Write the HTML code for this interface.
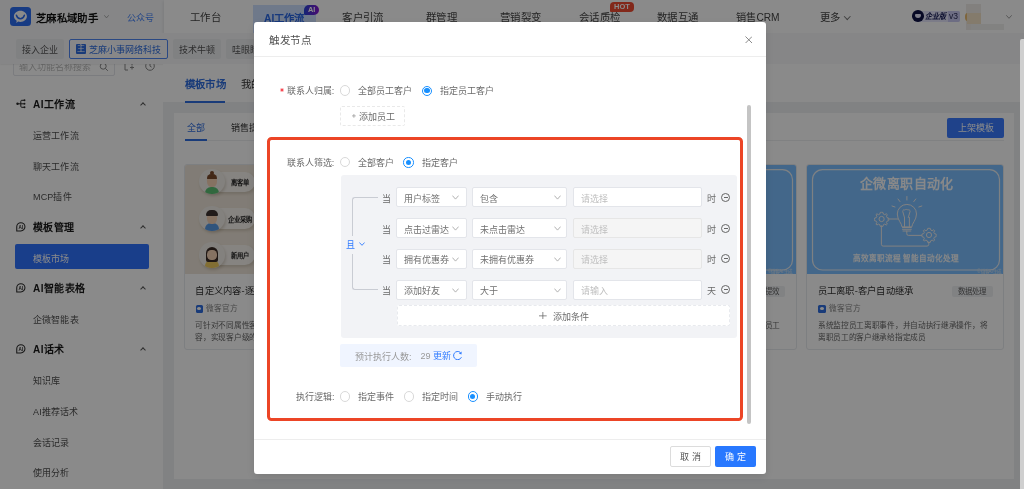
<!DOCTYPE html>
<html lang="zh-CN"><head><meta charset="utf-8">
<style>
*{box-sizing:border-box;margin:0;padding:0}
html,body{width:1024px;height:489px;overflow:hidden}
body{font-family:"Liberation Sans",sans-serif;background:#eef0f3;position:relative;color:#333;will-change:transform}
.a{position:absolute}
.t{position:absolute;white-space:nowrap;line-height:22px;height:20px}
svg{display:block}
/* header */
#hdr{left:0;top:0;width:1024px;height:33.3px;background:#f7f8fa}
#nav{left:163.5px;top:0;width:860px;height:33.3px;background:#fff;box-shadow:-1px 1px 3px rgba(0,0,0,.08)}
#row2{left:0;top:33.3px;width:1024px;height:30.5px;background:#f7f8fa;box-shadow:0 .6px 1.5px rgba(0,0,0,.12)}
.chip{position:absolute;top:39px;height:19.8px;background:#eceef1;border-radius:2px}
#side{left:0;top:63.8px;width:163.3px;height:426px;background:#fff}
.si{position:absolute;left:33px;font-size:9px;letter-spacing:.15px;color:#505050;line-height:22.5px;height:20px;white-space:nowrap}
.sh{position:absolute;left:33px;font-size:10px;letter-spacing:.45px;font-weight:bold;color:#1a1a1a;line-height:22.5px;height:20px;white-space:nowrap}
.chev{position:absolute;left:140px;width:6px;height:6px}
#mask{left:0;top:0;width:1024px;height:489px;background:rgba(0,0,0,.46)}
/* modal */
#modal{left:254.3px;top:21.8px;width:512px;height:452px;background:#fff;border-radius:3px;box-shadow:0 3px 10px rgba(0,0,0,.12)}
.lab{position:absolute;font-size:9px;color:#6a6a6a;line-height:22px;height:20px;white-space:nowrap}
.rd{position:absolute;width:10.4px;height:10.4px;border:1px solid #d9d9d9;border-radius:50%;background:#fff}
.rd.on{border-color:#1890ff}
.rd.on:after{content:"";position:absolute;left:1.6px;top:1.6px;width:5.2px;height:5.2px;border-radius:50%;background:#1890ff}
.sel{position:absolute;height:19.6px;background:#fff;border:1px solid #e3e5ea;border-radius:2px}
.sel span{position:absolute;left:7px;top:0;line-height:23px;font-size:9px;color:#707070;white-space:nowrap}
.sel svg{position:absolute;top:6.6px}
.inp{position:absolute;left:573px;width:128.5px;height:19.6px;background:#fff;border:1px solid #e3e5ea;border-radius:2px}
.inp span{position:absolute;left:7px;top:0;line-height:23px;font-size:9px;color:#bfbfbf;white-space:nowrap}
.inp.dis{background:#f5f5f5;border-color:#e6e6e6}
.dang{position:absolute;left:382.2px;font-size:9px;color:#6a6a6a;line-height:25px;white-space:nowrap}
.unit{position:absolute;left:707px;font-size:9px;color:#6a6a6a;line-height:25px;white-space:nowrap}
.minus{position:absolute;left:721px;width:9.4px;height:9.4px;border:1px solid #666;border-radius:50%}
.minus:after{content:"";position:absolute;left:1.8px;top:3.2px;width:3.8px;height:1px;background:#666}
</style></head><body>

<!-- ============ BACKGROUND PAGE ============ -->
<div id="hdr" class="a"></div>
<div id="nav" class="a"></div>

<!-- logo -->
<div class="a" style="left:10.3px;top:6.7px;width:20.5px;height:19.8px;background:#2c6df2;border-radius:3.5px">
 <svg width="20.5" height="19.8" viewBox="0 0 20.5 19.8"><path d="M10.4 3.7c3.6 0 6.5 2.5 6.5 5.6s-2.9 5.6-6.5 5.6c-.8 0-1.5-.1-2.2-.3l-1.9 1.5.4-2.4C5 12.7 3.9 11.1 3.9 9.3c0-3.1 2.9-5.6 6.5-5.6z" fill="#fff"/><path d="M6.4 8.3c.7 2.2 2.2 3.4 4 3.4s3.3-1.2 4-3.4" stroke="#2c6df2" stroke-width="1.5" fill="none" stroke-linecap="round"/></svg>
</div>
<div class="t" style="left:35.8px;top:7.9px;font-size:10.4px;letter-spacing:.4px;font-weight:bold;color:#111">芝麻私域助手</div>
<svg class="a" style="left:104px;top:14.5px" width="5" height="3.5" viewBox="0 0 5 3.5"><path d="M.3.3l2.2 2.6L4.7.3" stroke="#999" stroke-width=".8" fill="none"/></svg>
<div class="t" style="left:126.7px;top:7px;font-size:9px;color:#4784fa">公众号</div>

<!-- nav items -->
<div class="a" style="left:252.8px;top:5.3px;width:63.2px;height:28px;background:#cddfff"></div>
<div class="t" style="left:190px;top:6.8px;font-size:10.4px;letter-spacing:.4px;color:#454545">工作台</div>
<div class="t" style="left:264px;top:7.6px;font-size:10.3px;color:#2a68e6;font-weight:bold">AI工作流</div>
<div class="a" style="left:304px;top:5.1px;width:15.3px;height:10px;border-radius:5px 5px 5px 1px;background:linear-gradient(90deg,#2745d8,#8614d0);color:#fff;font-size:7.4px;font-weight:bold;line-height:10.4px;text-align:center">AI</div>
<div class="t" style="left:342.3px;top:6.6px;font-size:10.4px;letter-spacing:.4px;color:#454545">客户引流</div>
<div class="t" style="left:425.8px;top:6.6px;font-size:10.4px;letter-spacing:.4px;color:#454545">群管理</div>
<div class="t" style="left:500px;top:6.6px;font-size:10.4px;letter-spacing:.4px;color:#454545">营销裂变</div>
<div class="t" style="left:578.8px;top:6.6px;font-size:10.4px;letter-spacing:.4px;color:#454545">会话质检</div>
<div class="a" style="left:610px;top:1.9px;width:24px;height:9.8px;border-radius:4px 4px 4px 1px;background:#f04a30;color:#fff;font-size:7.5px;font-weight:bold;line-height:9.8px;text-align:center">HOT</div>
<div class="t" style="left:657px;top:6.6px;font-size:10.4px;letter-spacing:.4px;color:#454545">数据互通</div>
<div class="t" style="left:736.4px;top:6.6px;font-size:10.2px;color:#454545">销售CRM</div>
<div class="t" style="left:820px;top:6.6px;font-size:10.4px;letter-spacing:.4px;color:#454545">更多</div>
<div class="a" style="left:845px;top:13.5px;width:4.5px;height:4.5px;border-right:1px solid #777;border-bottom:1px solid #777;transform:rotate(45deg)"></div>

<!-- enterprise badge -->
<div class="a" style="left:914px;top:11px;width:45.5px;height:10.8px;background:#e6e6fb;border-radius:2px"></div>
<div class="a" style="left:947.5px;top:11px;width:12px;height:10.8px;background:#c9c9f2;border-radius:0 2px 2px 0;font-size:8.5px;color:#2a2d55;line-height:10.8px;text-align:center">v3</div>
<div class="a" style="left:912px;top:10.3px;width:11.7px;height:11.7px;border-radius:50%;background:#0e1245"></div>
<div class="a" style="left:914.8px;top:14.2px;width:6.2px;height:3.6px;border-radius:1px 1px 3px 3px;background:#e6e6fb"></div>
<div class="a" style="left:925px;top:11px;font-size:7px;line-height:11.5px;white-space:nowrap;font-style:italic;font-weight:bold;color:#1a1f5a;transform:scaleY(1.15);transform-origin:0 50%">企业版</div>
<!-- avatar blur -->
<div class="a" style="left:966px;top:4.2px;width:15px;height:25.6px;background:#f0ede9"></div>
<div class="a" style="left:964.6px;top:12.8px;width:5px;height:8.5px;border-radius:50%;background:#e9bb70"></div>
<div class="a" style="left:967px;top:12.5px;width:14px;height:11.5px;background:#f4e4c8"></div>
<div class="a" style="left:971px;top:24px;width:33px;height:5.5px;background:#f1f0ef"></div>
<svg class="a" style="left:1006.3px;top:14.6px" width="6" height="4" viewBox="0 0 6 4"><path d="M.3.3l2.7 3L5.7.3" stroke="#8a8a8a" stroke-width=".8" fill="none"/></svg>

<!-- sidebar -->
<div id="side" class="a"></div>
<div class="a" style="left:12.5px;top:56px;width:102.3px;height:19.6px;border:1px solid #e3e5ea;border-radius:2px;background:#fff"></div>
<div class="t" style="left:19px;top:56px;font-size:9px;color:#bbb">输入功能名称搜索</div>
<svg class="a" style="left:98.5px;top:61.5px" width="10" height="10" viewBox="0 0 10 10"><circle cx="4.2" cy="4.2" r="3" stroke="#888" stroke-width="1" fill="none"/><path d="M6.4 6.4l2.4 2.4" stroke="#888" stroke-width="1"/></svg>
<svg class="a" style="left:124.2px;top:60.5px" width="10" height="11" viewBox="0 0 10 11"><path d="M1 1v8h3M1 1h7v3" stroke="#888" stroke-width="1" fill="none"/><path d="M6 6.5h4M8 4.5v4" stroke="#888" stroke-width="1"/></svg>
<svg class="a" style="left:144.5px;top:59.5px" width="10" height="12" viewBox="0 0 10 12"><circle cx="5" cy="6" r="4.3" stroke="#888" stroke-width="1" fill="none"/><path d="M5 3.5v2.6l1.6 1" stroke="#888" stroke-width="1" fill="none"/></svg>
<!-- section icons -->
<svg class="a" style="left:15.8px;top:99px" width="10" height="10" viewBox="0 0 10 10"><path d="M8.2 1.3H5.8Q4.8 1.3 4.8 2.3V7.3Q4.8 8.3 5.8 8.3H8.2M1.6 4.8H8.2" stroke="#2a2a2a" stroke-width="1" fill="none"/><circle cx="1.5" cy="4.8" r="1.2" fill="#2a2a2a"/><circle cx="8.5" cy="1.3" r=".95" fill="#2a2a2a"/><circle cx="8.5" cy="4.8" r=".95" fill="#2a2a2a"/><circle cx="8.5" cy="8.3" r=".95" fill="#2a2a2a"/></svg>
<div class="sh" style="top:94px">AI工作流</div>
<div class="si" style="top:124.9px">运营工作流</div>
<div class="si" style="top:155.7px">聊天工作流</div>
<div class="si" style="top:186.4px">MCP插件</div>
<div class="sh" style="top:217px">模板管理</div>
<div class="a" style="left:15.2px;top:244.2px;width:133.8px;height:25.3px;background:#2f73ff;border-radius:2px"></div>
<div class="si" style="top:247.7px;color:#fff">模板市场</div>
<div class="sh" style="top:278.2px">AI智能表格</div>
<div class="si" style="top:308.8px">企微智能表</div>
<div class="sh" style="top:339.4px">AI话术</div>
<div class="si" style="top:370.2px">知识库</div>
<div class="si" style="top:400.8px">AI推荐话术</div>
<div class="si" style="top:431.6px">会话记录</div>
<div class="si" style="top:462.2px">使用分析</div>
<div class="a" style="left:141px;top:102.5px;width:4px;height:4px;border-left:1px solid #555;border-top:1px solid #555;transform:rotate(45deg)"></div>
<div class="a" style="left:141px;top:225.5px;width:4px;height:4px;border-left:1px solid #555;border-top:1px solid #555;transform:rotate(45deg)"></div>
<div class="a" style="left:141px;top:286.8px;width:4px;height:4px;border-left:1px solid #555;border-top:1px solid #555;transform:rotate(45deg)"></div>
<div class="a" style="left:141px;top:348.1px;width:4px;height:4px;border-left:1px solid #555;border-top:1px solid #555;transform:rotate(45deg)"></div>
<svg class="a" style="left:15.6px;top:221.7px" width="10" height="10" viewBox="0 0 10 10"><path d="M.75 4.8A4.1 4.1 0 1 1 4.85 8.9H.75Z" stroke="#2a2a2a" stroke-width="1.05" fill="none"/><text x="4.9" y="6.6" font-size="4.6" text-anchor="middle" font-family="Liberation Sans" font-weight="bold" fill="#2a2a2a">AI</text></svg>
<svg class="a" style="left:15.6px;top:283.0px" width="10" height="10" viewBox="0 0 10 10"><path d="M.75 4.8A4.1 4.1 0 1 1 4.85 8.9H.75Z" stroke="#2a2a2a" stroke-width="1.05" fill="none"/><text x="4.9" y="6.6" font-size="4.6" text-anchor="middle" font-family="Liberation Sans" font-weight="bold" fill="#2a2a2a">AI</text></svg>
<svg class="a" style="left:15.6px;top:344.3px" width="10" height="10" viewBox="0 0 10 10"><path d="M.75 4.8A4.1 4.1 0 1 1 4.85 8.9H.75Z" stroke="#2a2a2a" stroke-width="1.05" fill="none"/><text x="4.9" y="6.6" font-size="4.6" text-anchor="middle" font-family="Liberation Sans" font-weight="bold" fill="#2a2a2a">AI</text></svg>

<!-- row2 -->
<div id="row2" class="a"></div>
<div class="chip" style="left:15.7px;width:48.3px"></div>
<div class="t" style="left:21.7px;top:39px;font-size:9px;letter-spacing:.1px;color:#555">接入企业</div>
<div class="a" style="left:69.1px;top:39.1px;width:98.8px;height:19.7px;border:1px solid #4f86f2;border-radius:2px;background:#f9fafc"></div>
<div class="a" style="left:76.2px;top:44.1px;width:9.8px;height:9.8px;background:#2f6ee0;border-radius:1px;color:#fff;font-size:8px;line-height:9.8px;text-align:center">主</div>
<div class="t" style="left:88.7px;top:39px;font-size:9px;letter-spacing:.1px;color:#2f6ee0">芝麻小事网络科技</div>
<div class="chip" style="left:172.8px;width:48.2px"></div>
<div class="t" style="left:179px;top:39px;font-size:9px;letter-spacing:.1px;color:#555">技术牛顿</div>
<div class="chip" style="left:226px;width:48px"></div>
<div class="t" style="left:232px;top:39px;font-size:9px;letter-spacing:.1px;color:#555">哇眼睛</div>



<!-- main -->
<div class="a" style="left:163.3px;top:63.8px;width:861px;height:38.2px;background:#fff"></div>
<div class="t" style="left:184.5px;top:73.8px;font-size:10.4px;letter-spacing:.4px;font-weight:bold;color:#2f6ee0">模板市场</div>
<div class="a" style="left:184.5px;top:101px;width:40.5px;height:2px;background:#2f6ee0"></div>
<div class="t" style="left:241px;top:73.8px;font-size:10.4px;letter-spacing:.4px;color:#333">我的模板</div>
<div class="a" style="left:173.7px;top:112.8px;width:840.6px;height:366px;background:#fff"></div>
<div class="t" style="left:187px;top:117.4px;font-size:9px;color:#2f6ee0">全部</div>
<div class="a" style="left:184.5px;top:140px;width:819.5px;height:1px;background:#eceef1"></div>
<div class="a" style="left:184.5px;top:139px;width:22.8px;height:2px;background:#2f6ee0"></div>
<div class="t" style="left:231px;top:117.4px;font-size:9px;color:#333">销售提效</div>
<div class="a" style="left:947.4px;top:117.7px;width:56.5px;height:20.1px;background:#3a7bff;border-radius:2px;color:#fff;font-size:9px;line-height:20.1px;text-align:center">上架模板</div>
<div class="a" style="left:183.8px;top:164.2px;width:198.8px;height:186px;border:1px solid #e8eaee;border-radius:3px;background:#fff;overflow:hidden"><div class="a" style="left:0;top:0;width:198px;height:109px;background:#efe6da"></div><div class="a" style="left:16px;top:6.5px;width:54px;height:20.4px;border-radius:10px;background:#f8f4ef;box-shadow:1.5px 2px 3px rgba(90,70,40,.18)"></div><div class="a" style="left:14.6px;top:4.1px;width:25.2px;height:25.2px;border-radius:50%;background:#f2eee9;box-shadow:1px 2px 3px rgba(90,70,40,.2);overflow:hidden"><div class="a" style="left:6px;top:17.5px;width:13.2px;height:10px;border-radius:6px 6px 0 0;background:#5cc074"></div><div class="a" style="left:7.6px;top:6.2px;width:10px;height:11.5px;border-radius:45%;background:#f5d2b6"></div><div class="a" style="left:10.6px;top:1.8px;width:4px;height:4px;border-radius:50%;background:#7b4a2c"></div><div class="a" style="left:7.4px;top:4.6px;width:10.4px;height:5px;border-radius:5px 5px 1px 1px;background:#7b4a2c"></div></div><div class="t" style="left:41px;top:6.699999999999999px;width:28px;text-align:center;font-size:6.3px;font-weight:bold;color:#1d1d1d">离客单</div><div class="a" style="left:16px;top:43.2px;width:54px;height:20.4px;border-radius:10px;background:#f8f4ef;box-shadow:1.5px 2px 3px rgba(90,70,40,.18)"></div><div class="a" style="left:14.6px;top:40.8px;width:25.2px;height:25.2px;border-radius:50%;background:#f2eee9;box-shadow:1px 2px 3px rgba(90,70,40,.2);overflow:hidden"><div class="a" style="left:6px;top:17.5px;width:13.2px;height:10px;border-radius:6px 6px 0 0;background:#5a9be6"></div><div class="a" style="left:7.6px;top:6.2px;width:10px;height:11.5px;border-radius:45%;background:#f5d2b6"></div><div class="a" style="left:7px;top:4.2px;width:11.2px;height:5.5px;border-radius:5px 5px 1px 1px;background:#3d3330"></div></div><div class="t" style="left:41px;top:43.4px;width:28px;text-align:center;font-size:6.3px;font-weight:bold;color:#1d1d1d">企业采购</div><div class="a" style="left:16px;top:79.7px;width:54px;height:20.4px;border-radius:10px;background:#f8f4ef;box-shadow:1.5px 2px 3px rgba(90,70,40,.18)"></div><div class="a" style="left:14.6px;top:77.30000000000001px;width:25.2px;height:25.2px;border-radius:50%;background:#f2eee9;box-shadow:1px 2px 3px rgba(90,70,40,.2);overflow:hidden"><div class="a" style="left:6px;top:17.5px;width:13.2px;height:10px;border-radius:6px 6px 0 0;background:#f0cc5e"></div><div class="a" style="left:7.6px;top:6.2px;width:10px;height:11.5px;border-radius:45%;background:#f5d2b6"></div><div class="a" style="left:6.2px;top:4.6px;width:12.8px;height:15px;border-radius:6px 6px 2px 2px;background:#3a2c26"></div><div class="a" style="left:8px;top:8px;width:9.2px;height:10px;border-radius:45%;background:#f5d2b6"></div></div><div class="t" style="left:41px;top:79.9px;width:28px;text-align:center;font-size:6.3px;font-weight:bold;color:#1d1d1d">新用户</div><div class="t" style="left:10.6px;top:115.2px;font-size:9.3px;letter-spacing:.2px;color:#333">自定义内容-逐个发送</div><div class="a" style="left:10.8px;top:139.6px;width:7.8px;height:7.8px;background:#2f6ee0;border-radius:1.5px"><div class="a" style="left:1.6px;top:1.8px;width:4.3px;height:3.6px;border-radius:50%;background:#fff"></div></div><div class="t" style="left:21.6px;top:133px;font-size:7.7px;color:#888">微客官方</div><div class="t" style="left:10.6px;top:149.7px;font-size:7.7px;letter-spacing:-.3px;color:#666">可针对不同属性客户发送不同内容</div><div class="t" style="left:10.6px;top:161.5px;font-size:7.7px;letter-spacing:-.3px;color:#666">容，实现客户级的精准触达</div></div>
<div class="a" style="left:392px;top:164.2px;width:198px;height:186px;border:1px solid #e8eaee;border-radius:3px;background:#fff;overflow:hidden"><svg class="a" style="left:0;top:0" width="198" height="109" viewBox="0 0 198 109">
<rect width="198" height="109" fill="#7dbfff"/>
<rect x="5.5" y="4.6" width="187" height="100.4" rx="10" fill="none" stroke="#e9eef3" stroke-width="1.2"/>
</svg>
<div class="t" style="left:168px;top:95.5px;font-size:4.5px;color:#d8e4ef">©微客AI生成</div>
<div class="t" style="left:10.6px;top:115.2px;font-size:9.3px;letter-spacing:.2px;color:#333"></div><div class="a" style="left:10.8px;top:139.6px;width:7.8px;height:7.8px;background:#2f6ee0;border-radius:1.5px"><div class="a" style="left:1.6px;top:1.8px;width:4.3px;height:3.6px;border-radius:50%;background:#fff"></div></div><div class="t" style="left:21.6px;top:133px;font-size:7.7px;color:#888">微客官方</div><div class="t" style="left:10.6px;top:149.7px;font-size:7.7px;letter-spacing:-.3px;color:#666"></div><div class="t" style="left:10.6px;top:161.5px;font-size:7.7px;letter-spacing:-.3px;color:#666"></div></div>
<div class="a" style="left:599px;top:164.2px;width:198px;height:186px;border:1px solid #e8eaee;border-radius:3px;background:#fff;overflow:hidden"><svg class="a" style="left:0;top:0" width="198" height="109" viewBox="0 0 198 109">
<rect width="198" height="109" fill="#7dbfff"/>
<rect x="5.5" y="4.6" width="187" height="100.4" rx="10" fill="none" stroke="#e9eef3" stroke-width="1.2"/>
</svg>
<div class="t" style="left:168px;top:95.5px;font-size:4.5px;color:#d8e4ef">©微客AI生成</div>
<div class="t" style="left:10.6px;top:115.2px;font-size:9.3px;letter-spacing:.2px;color:#333">智能群发-销售提效</div><div class="a" style="left:145px;top:120.6px;width:40.4px;height:11.3px;background:#eef0f3;border-radius:2px;font-size:7.5px;color:#666;line-height:11.3px;text-align:center">销售提效</div><div class="a" style="left:10.8px;top:139.6px;width:7.8px;height:7.8px;background:#2f6ee0;border-radius:1.5px"><div class="a" style="left:1.6px;top:1.8px;width:4.3px;height:3.6px;border-radius:50%;background:#fff"></div></div><div class="t" style="left:21.6px;top:133px;font-size:7.7px;color:#888">微客官方</div><div class="t" style="left:10.6px;top:149.7px;font-size:7.7px;letter-spacing:-.3px;color:#666">可针对不同属性客户发送不同内容，自动通知员工</div><div class="t" style="left:10.6px;top:161.5px;font-size:7.7px;letter-spacing:-.3px;color:#666"></div></div>
<div class="a" style="left:806.3px;top:164.2px;width:198px;height:186px;border:1px solid #e8eaee;border-radius:3px;background:#fff;overflow:hidden"><svg class="a" style="left:0;top:0" width="198" height="109" viewBox="0 0 198 109">
<rect width="198" height="109" fill="#7dbfff"/>
<rect x="5.5" y="4.6" width="187" height="100.4" rx="10" fill="none" stroke="#e9eef3" stroke-width="1.2"/>
<g stroke="#eeeeee" stroke-width="1" fill="none" stroke-linecap="round">
<path d="M99.9 31.5v3.5M91 34l2 2.6M108.8 34l-2 2.6M85 41l3 1M114.8 41l-3 1"/>
<path d="M95 61.5c0-3-4.7-6.5-4.7-12.5a9.6 9.6 0 0 1 19.2 0c0 6-4.7 9.5-4.7 12.5z"/>
<path d="M95.5 62.5h8.8M95.5 64.3h8.8M96 66h7.8"/>
<path d="M97.5 52.5l-1.8-6.2c0-1.4 1.4-1.9 2.1-1.2.7-.9 2.5-.9 3.2 0 .7-.7 2.1-.2 2.1 1.2l-1.8 6.2M97.5 52.5v9M102.4 52.5v9"/>
<path d="M99.8 66v2.8a1.6 1.6 0 0 0 1.6 1.6h13.3"/>
<path d="M74.4 60.7v18.6a1.8 1.8 0 0 0 1.8 1.8h43.8a1.8 1.8 0 0 0 1.8-1.8v-2.4"/>
<path d="M80.9 54h10.2"/>
</g>
<g fill="none" stroke="#eeeeee" stroke-width="1">
<circle cx="74.6" cy="54" r="2.6"/>
<path d="M74.6 47.3l1.3.1.5 1.7 1.3.6 1.6-.9 1 .9-.9 1.6.6 1.3 1.7.5.1 1.3-.1 1.3-1.7.5-.6 1.3.9 1.6-1 .9-1.6-.9-1.3.6-.5 1.7-1.3.1-1.3-.1-.5-1.7-1.3-.6-1.6.9-.9-.9.9-1.6-.6-1.3-1.7-.5-.1-1.3.1-1.3 1.7-.5.6-1.3-.9-1.6.9-.9 1.6.9 1.3-.6.5-1.7z"/>
<circle cx="122" cy="70" r="2.6"/>
<path d="M122 63.3l1.3.1.5 1.7 1.3.6 1.6-.9 1 .9-.9 1.6.6 1.3 1.7.5.1 1.3-.1 1.3-1.7.5-.6 1.3.9 1.6-1 .9-1.6-.9-1.3.6-.5 1.7-1.3.1-1.3-.1-.5-1.7-1.3-.6-1.6.9-.9-.9.9-1.6-.6-1.3-1.7-.5-.1-1.3.1-1.3 1.7-.5.6-1.3-.9-1.6.9-.9 1.6.9 1.3-.6.5-1.7z"/>
</g>
</svg>
<div class="t" style="left:52.7px;top:7.6px;font-size:13px;letter-spacing:.4px;font-weight:bold;color:#fbfcfd">企微离职自动化</div>
<div class="t" style="left:45.5px;top:82.6px;font-size:7.6px;font-weight:bold;color:#f8f9fa">高效离职流程 智能自动化处理</div>
<div class="t" style="left:170px;top:95.5px;font-size:4.5px;color:#d8e4ef">©微客AI生成</div>
<div class="t" style="left:10.6px;top:115.2px;font-size:9.3px;letter-spacing:.2px;color:#333">员工离职-客户自动继承</div><div class="a" style="left:145px;top:120.6px;width:40.4px;height:11.3px;background:#eef0f3;border-radius:2px;font-size:7.5px;color:#666;line-height:11.3px;text-align:center">数据处理</div><div class="a" style="left:10.8px;top:139.6px;width:7.8px;height:7.8px;background:#2f6ee0;border-radius:1.5px"><div class="a" style="left:1.6px;top:1.8px;width:4.3px;height:3.6px;border-radius:50%;background:#fff"></div></div><div class="t" style="left:21.6px;top:133px;font-size:7.7px;color:#888">微客官方</div><div class="t" style="left:10.6px;top:149.7px;font-size:7.7px;letter-spacing:-.3px;color:#666">系统监控员工离职事件，并自动执行继承操作，将</div><div class="t" style="left:10.6px;top:161.5px;font-size:7.7px;letter-spacing:-.3px;color:#666">离职员工的客户继承给指定成员</div></div>
<div id="mask" class="a"></div>
<div class="a" style="left:1020px;top:39.4px;width:4px;height:450px;background:#cfcfcf;border-radius:2px 0 0 0"></div>


<!-- ============ MODAL ============ -->
<div id="modal" class="a"></div>
<div class="t" style="left:269.4px;top:28.8px;font-size:10.5px;letter-spacing:.5px;color:#505050">触发节点</div>
<svg class="a" style="left:744.6px;top:35.6px" width="7.6" height="7.6" viewBox="0 0 8 8"><path d="M.5.5l7 7M7.5.5l-7 7" stroke="#777" stroke-width=".9"/></svg>
<div class="a" style="left:254.3px;top:56px;width:512px;height:1px;background:#ededed"></div>

<svg class="a" style="left:280.1px;top:87.6px" width="4" height="4" viewBox="0 0 4 4"><path d="M2 .2v3.6M.4 1.1l3.2 1.8M.4 2.9l3.2-1.8" stroke="#f5222d" stroke-width=".8"/></svg>
<div class="lab" style="left:286.8px;top:79.6px">联系人归属:</div>
<div class="rd" style="left:339.5px;top:85.3px"></div>
<div class="lab" style="left:357.8px;top:80px">全部员工客户</div>
<div class="rd on" style="left:421.8px;top:85.6px"></div>
<div class="lab" style="left:439.5px;top:80px">指定员工客户</div>
<div class="a" style="left:339.5px;top:105.5px;width:65px;height:20.5px;border:1px dashed #e9e9e9;border-radius:2px"></div>
<svg class="a" style="left:351.8px;top:114.2px" width="3.8" height="3.8" viewBox="0 0 4 4"><path d="M2 0v4M0 2h4" stroke="#8c8c8c" stroke-width=".7"/></svg>
<div class="lab" style="left:358.6px;top:106px">添加员工</div>

<div class="a" style="left:267.2px;top:137px;width:476.2px;height:283.5px;border:3px solid #ec4526;border-radius:4.5px"></div>
<div class="lab" style="left:286.8px;top:151.7px">联系人筛选:</div>
<div class="rd" style="left:339.5px;top:156.8px"></div>
<div class="lab" style="left:357.9px;top:152.3px">全部客户</div>
<div class="rd on" style="left:403.4px;top:157.2px"></div>
<div class="lab" style="left:421.9px;top:152.3px">指定客户</div>

<div class="a" style="left:340.5px;top:174.5px;width:396.8px;height:163.3px;background:#f2f3f6;border-radius:3px"></div>
<div class="a" style="left:352.4px;top:197.2px;width:26px;height:39px;border-left:1px solid #c9ccd3;border-top:1px solid #c9ccd3;border-radius:3px 0 0 0"></div>
<div class="a" style="left:352.4px;top:253.5px;width:26px;height:36.4px;border-left:1px solid #c9ccd3;border-bottom:1px solid #c9ccd3;border-radius:0 0 0 3px"></div>
<div class="lab" style="left:346.3px;top:234px;color:#2f7bff">且</div>
<svg class="a" style="left:358.8px;top:241.6px" width="6" height="4" viewBox="0 0 6 4"><path d="M.4.5l2.6 2.8L5.6.5" stroke="#2f7bff" stroke-width=".9" fill="none"/></svg>
<div class="dang" style="top:187.45px">当</div>
<div class="sel" style="left:396px;top:187.2px;width:71px"><span>用户标签</span><svg style="left:55.2px" width="7" height="5" viewBox="0 0 7 5"><path d="M.4.6l3.1 3.5L6.6.6" stroke="#a8a8a8" stroke-width=".9" fill="none"/></svg></div>
<div class="sel" style="left:471.5px;top:187.2px;width:95.5px"><span>包含</span><svg style="left:81.7px" width="7" height="5" viewBox="0 0 7 5"><path d="M.4.6l3.1 3.5L6.6.6" stroke="#a8a8a8" stroke-width=".9" fill="none"/></svg></div>
<div class="inp" style="top:187.2px"><span>请选择</span></div>
<div class="unit" style="top:187.45px">时</div>
<div class="minus" style="top:192.75px"></div>
<div class="dang" style="top:218.25px">当</div>
<div class="sel" style="left:396px;top:218.2px;width:71px"><span>点击过雷达</span><svg style="left:55.2px" width="7" height="5" viewBox="0 0 7 5"><path d="M.4.6l3.1 3.5L6.6.6" stroke="#a8a8a8" stroke-width=".9" fill="none"/></svg></div>
<div class="sel" style="left:471.5px;top:218.2px;width:95.5px"><span>未点击雷达</span><svg style="left:81.7px" width="7" height="5" viewBox="0 0 7 5"><path d="M.4.6l3.1 3.5L6.6.6" stroke="#a8a8a8" stroke-width=".9" fill="none"/></svg></div>
<div class="inp dis" style="top:218.2px"><span>请选择</span></div>
<div class="unit" style="top:218.25px">时</div>
<div class="minus" style="top:223.55px"></div>
<div class="dang" style="top:247.95px">当</div>
<div class="sel" style="left:396px;top:249.2px;width:71px"><span style="top:-1px">拥有优惠券</span><svg style="left:55.2px" width="7" height="5" viewBox="0 0 7 5"><path d="M.4.6l3.1 3.5L6.6.6" stroke="#a8a8a8" stroke-width=".9" fill="none"/></svg></div>
<div class="sel" style="left:471.5px;top:249.2px;width:95.5px"><span style="top:-1px">未拥有优惠券</span><svg style="left:81.7px" width="7" height="5" viewBox="0 0 7 5"><path d="M.4.6l3.1 3.5L6.6.6" stroke="#a8a8a8" stroke-width=".9" fill="none"/></svg></div>
<div class="inp dis" style="top:249.2px"><span style="top:-1px">请选择</span></div>
<div class="unit" style="top:247.95px">时</div>
<div class="minus" style="top:253.9px"></div>
<div class="dang" style="top:278.5px">当</div>
<div class="sel" style="left:396px;top:280.2px;width:71px"><span style="top:-1px">添加好友</span><svg style="left:55.2px" width="7" height="5" viewBox="0 0 7 5"><path d="M.4.6l3.1 3.5L6.6.6" stroke="#a8a8a8" stroke-width=".9" fill="none"/></svg></div>
<div class="sel" style="left:471.5px;top:280.2px;width:95.5px"><span style="top:-1px">大于</span><svg style="left:81.7px" width="7" height="5" viewBox="0 0 7 5"><path d="M.4.6l3.1 3.5L6.6.6" stroke="#a8a8a8" stroke-width=".9" fill="none"/></svg></div>
<div class="inp" style="top:280.2px"><span style="top:-1px">请输入</span></div>
<div class="unit" style="top:278.5px">天</div>
<div class="minus" style="top:284.6px"></div>

<div class="a" style="left:397.4px;top:305.3px;width:332.6px;height:20.7px;background:#fff;border:1px dashed #e8eaee;border-radius:2px"></div>
<svg class="a" style="left:539.3px;top:311.8px" width="7.7" height="7.7" viewBox="0 0 8 8"><path d="M4 0v8M0 4h8" stroke="#666" stroke-width=".8"/></svg>
<div class="lab" style="left:552.8px;top:305.6px">添加条件</div>

<div class="a" style="left:339.9px;top:343.6px;width:137.4px;height:23.2px;background:#f0f5ff;border-radius:2px"></div>
<div class="lab" style="left:354.9px;top:345.5px;color:#999">预计执行人数:</div>
<div class="lab" style="left:420.5px;top:344.8px;color:#999">29</div>
<div class="lab" style="left:432.8px;top:344.8px;color:#2f7bff">更新</div>
<svg class="a" style="left:452.9px;top:350.5px" width="9.2" height="9.2" viewBox="0 0 9.2 9.2"><path d="M7.3 1.4A4.1 4.1 0 1 0 8.45 6.2" stroke="#2f7bff" stroke-width="1" fill="none"/><path d="M8.7.5L8.5 3.4 5.9 2.5z" fill="#2f7bff"/></svg>

<div class="lab" style="left:296px;top:386.1px">执行逻辑:</div>
<div class="rd" style="left:339.6px;top:391.2px"></div>
<div class="lab" style="left:358px;top:386.4px">指定事件</div>
<div class="rd" style="left:403.7px;top:391.2px"></div>
<div class="lab" style="left:421.5px;top:386.4px">指定时间</div>
<div class="rd on" style="left:467.6px;top:391.3px"></div>
<div class="lab" style="left:485.6px;top:386.4px">手动执行</div>

<div class="a" style="left:747.3px;top:104.9px;width:3.7px;height:318.8px;background:#c4c4c4;border-radius:2px"></div>
<div class="a" style="left:254.3px;top:439px;width:512px;height:1px;background:#ededed"></div>
<div class="a" style="left:669.5px;top:446.3px;width:41px;height:20.4px;border:1px solid #dcdcdc;border-radius:2px;background:#fff;font-size:9px;color:#555;line-height:21.4px;text-align:center;letter-spacing:3px;text-indent:3px">取消</div>
<div class="a" style="left:715.2px;top:446.3px;width:40.5px;height:20.4px;border-radius:2px;background:#2878ff;font-size:9px;color:#fff;line-height:23.4px;text-align:center;letter-spacing:3px;text-indent:3px">确定</div>

</body></html>
